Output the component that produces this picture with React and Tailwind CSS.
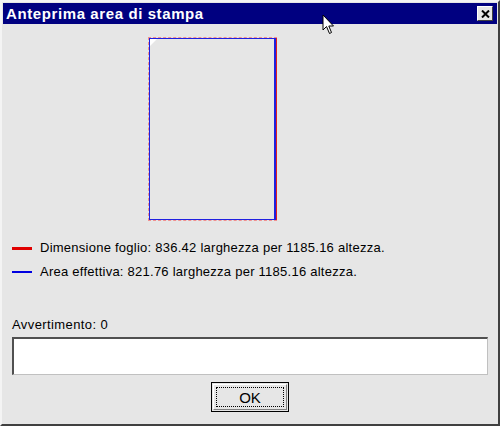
import React from "react";

export default function App() {
  return (
    <div
      className="relative w-[500px] h-[426px] bg-[#e6e6e6] border-l-[2px] border-t-[2px] border-r-[2px] border-b-[2px] border-l-[#f4f4f4] border-t-[#f4f4f4] border-r-[#404040] border-b-[#404040] flex flex-col overflow-hidden"
      style={{ fontFamily: '"Liberation Sans", Arial, sans-serif' }}
    >
      {/* Title bar */}
      <div className="mx-[1px] mt-[1px] h-[21px] bg-[#000080] flex items-center justify-between pl-[3px] pr-[4px]">
        <span className="text-white font-bold text-[15px] leading-none tracking-[0.6px]">
          Anteprima area di stampa
        </span>
        <div className="w-[16px] h-[15px] bg-[#e6e6e6] border-t border-l border-t-white border-l-white border-r border-b border-r-[#404040] border-b-[#404040] flex items-center justify-center">
          <svg width="9" height="8" viewBox="0 0 9 8">
            <path d="M1 0.5 L8 7.5 M8 0.5 L1 7.5" stroke="#000" strokeWidth="2" />
          </svg>
        </div>
      </div>

      {/* Preview */}
      <div className="flex mt-[13px] pl-[146px]">
        <div className="relative w-[129px] h-[184px] border border-dashed border-[#f09090]">
          <div className="absolute left-0 top-0 w-[126px] h-[182px] border border-[#2020e0]" />
          <div className="absolute left-[126px] top-0 w-[1px] h-[182px] bg-[#2020e0]" />
          <div className="absolute left-[127px] top-0 w-[1px] h-[182px] bg-[#e02020]" />
          <svg className="absolute left-[1px] top-[1px]" width="7" height="7" viewBox="0 0 7 7">
            <path d="M0 0 H7 L0 7 Z" fill="#ffffff" />
          </svg>
        </div>
      </div>

      {/* Legend */}
      <div className="flex flex-col gap-[8px] mt-[19px] pl-[10px] text-[13px] tracking-[0.25px] text-black leading-[16px]">
        <div className="flex items-center gap-[8px]">
          <div className="w-[20px] h-[3px] bg-[#e00000]" />
          <span>Dimensione foglio: 836.42 larghezza per 1185.16 altezza.</span>
        </div>
        <div className="flex items-center gap-[8px]">
          <div className="w-[20px] h-[2px] bg-[#0000e0]" />
          <span>Area effettiva: 821.76 larghezza per 1185.16 altezza.</span>
        </div>
      </div>

      {/* Warning */}
      <div className="mt-[37px] pl-[10px] text-[13px] tracking-[0.4px] leading-[16px] text-black">Avvertimento: 0</div>
      <div className="mt-[4px] mx-[10px] h-[38px] bg-white border-t-[2px] border-l-[2px] border-t-[#505050] border-l-[#505050] border-r border-b border-r-[#c0c0c0] border-b-[#c0c0c0]" />

      {/* OK button */}
      <div className="flex justify-center mt-[7px]">
        <button className="w-[78px] h-[30px] bg-[#e6e6e6] border border-black p-[1px]">
          <div className="w-full h-full border-t border-l border-t-white border-l-white border-r border-b border-r-[#808080] border-b-[#808080] p-[2px]">
            <div className="w-full h-full border border-dotted border-black flex items-center justify-center text-[15px] text-black leading-none">
              OK
            </div>
          </div>
        </button>
      </div>

      {/* Mouse cursor */}
      <svg className="absolute left-[320px] top-[12px]" width="14" height="22" viewBox="0 0 14 22">
        <path d="M1 1 L1 16 L4.5 12.5 L7.5 19.5 L9.5 18.5 L6.8 12 L11.5 12 Z" fill="#ffffff" stroke="#000" strokeWidth="1" strokeLinejoin="miter" />
      </svg>
    </div>
  );
}
